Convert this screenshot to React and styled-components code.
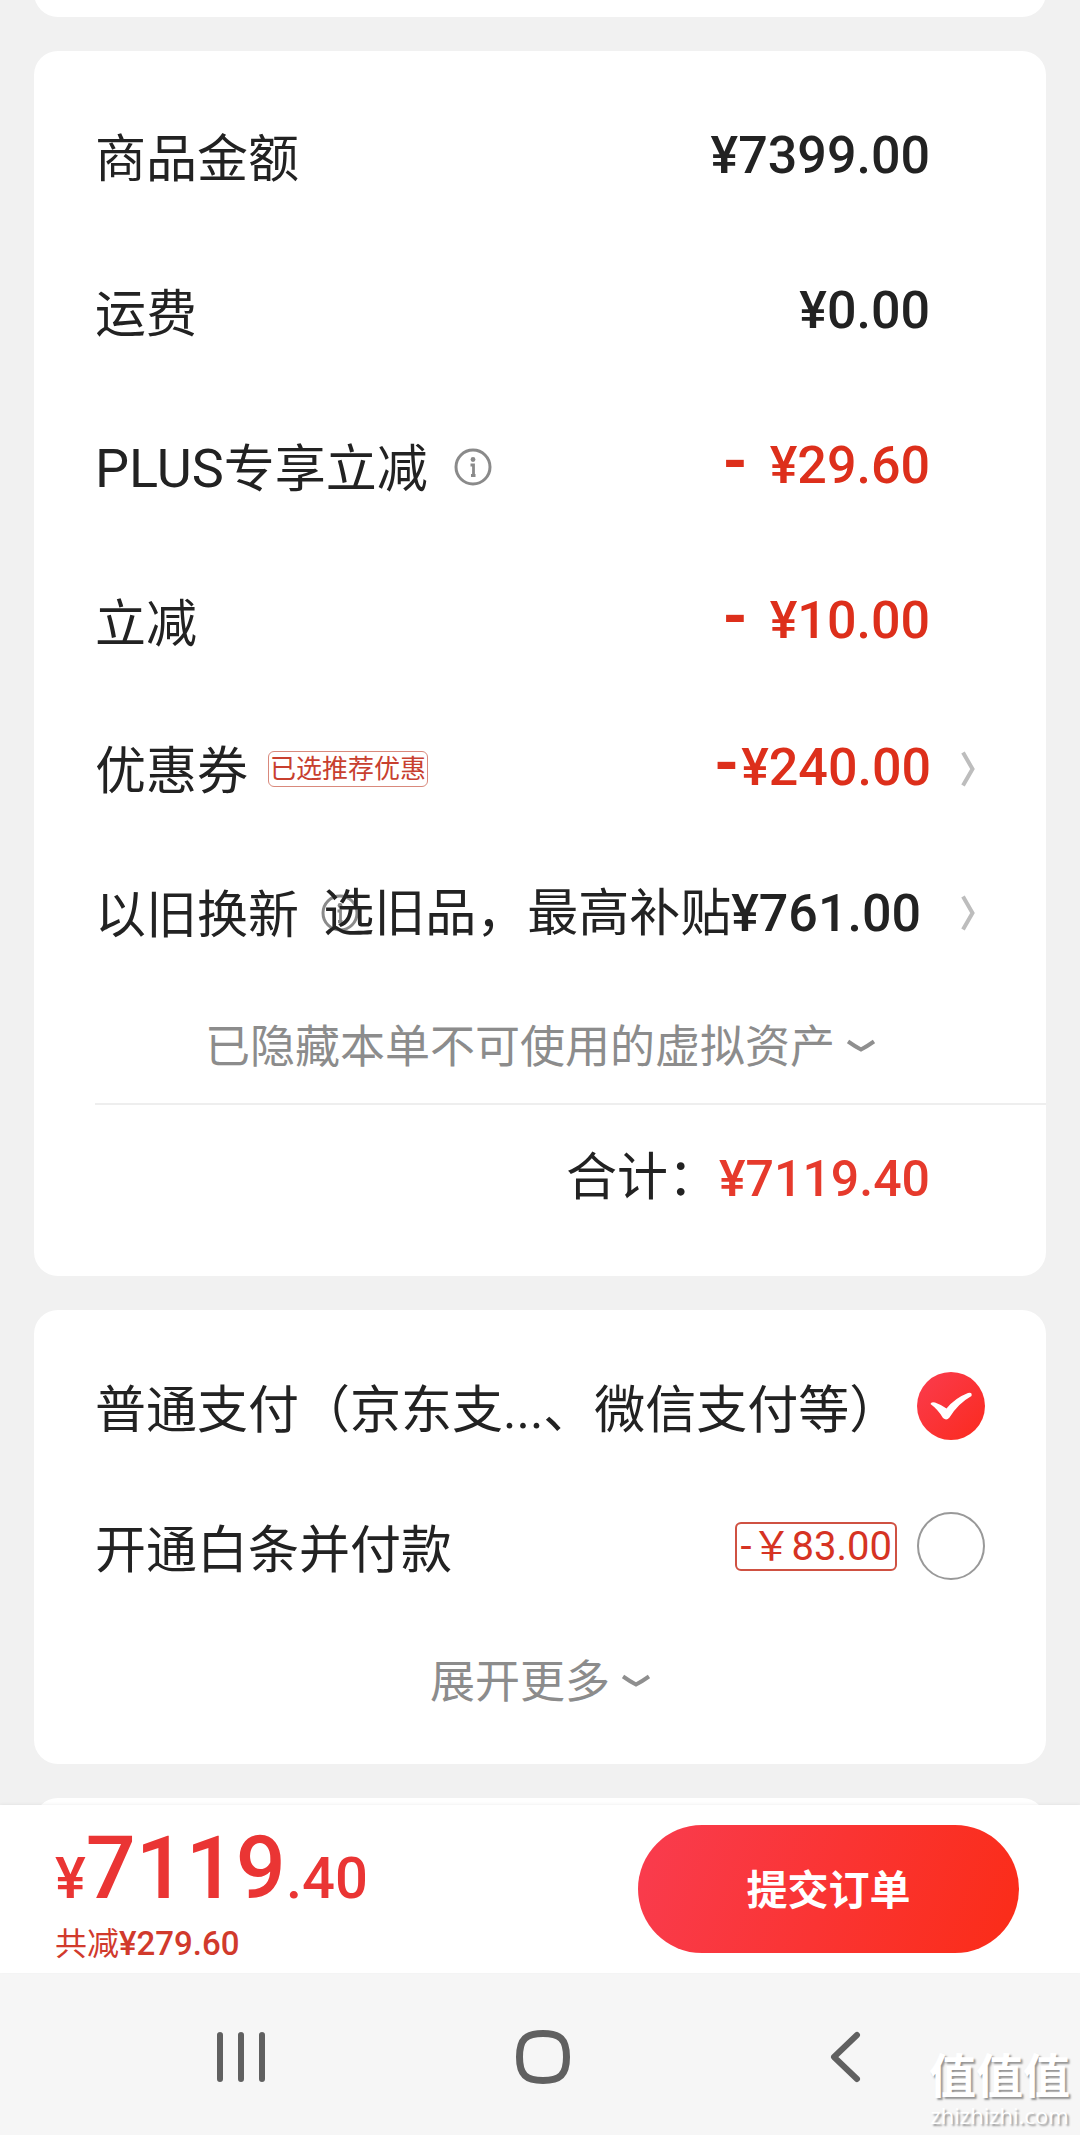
import React, { useState } from "react";
import styled, { createGlobalStyle } from "styled-components";

const GlobalStyle = createGlobalStyle`
  * { box-sizing: border-box; }
  body {
    margin: 0;
    background: #f1f1f1;
    color: #222;
    font-family: Roboto, "Noto Sans CJK SC", sans-serif;
  }
  button, input { font: inherit; color: inherit; margin: 0; padding: 0; }
  button { border: 0; background: none; cursor: pointer; }
`;

const Page = styled.div`
  position: relative;
  height: 100vh;
  display: flex;
  flex-direction: column;
`;

const Content = styled.main`
  flex: 1;
  min-height: 0;
  overflow: hidden;
  display: flex;
  flex-direction: column;
  gap: 34px;
  padding: 0 34px;
`;

const Card = styled.section`
  flex: none;
  background: #fff;
  border-radius: 24px;
  padding: ${(p) => p.$pad || "28px 0 31px"};
`;

const PreviousCard = styled(Card)`
  height: 60px;
  margin-top: -43px;
`;

const Row = styled.div`
  display: flex;
  align-items: center;
  height: ${(p) => p.$h || 155}px;
  padding: 0 61px;
  font-size: 51px;
  line-height: 60px;
  white-space: nowrap;
`;

const Label = styled.span`
  display: flex;
  align-items: center;
  gap: ${(p) => p.$gap || 26}px;
`;

const LabelText = styled.span`
  padding-top: 6px;
`;

const PayText = styled.span`
  padding-top: 10px;
`;

const Latin = styled.span`
  font-size: 54px;
`;

const Amount = styled.span`
  margin-left: auto;
  margin-right: ${(p) => p.$end ?? 55}px;
  padding-bottom: 2px;
  font-size: 52px;
  font-weight: 500;
  color: ${(p) => (p.$red ? "#dd2f1b" : "#222")};
`;

const Sign = styled.span`
  margin-right: ${(p) => (p.$wide ? 22 : 2)}px;
  font-size: 64px;
  font-weight: 700;
  line-height: 0;
`;

const TradeIn = styled.span`
  margin-left: auto;
  margin-right: 40px;
  padding-top: 2px;
  position: relative;
`;

const Price = styled.strong`
  font-size: 52px;
  font-weight: 500;
`;

const OverlappedInfo = styled.span`
  display: flex;
  margin-right: -48px;
`;

const CouponTag = styled.span`
  padding: 0 1px;
  border: 1px solid #d9897c;
  border-radius: 6px;
  color: #c8402f;
  font-size: 26px;
  line-height: 34px;
`;

const PriceTag = styled.span`
  margin-left: auto;
  margin-right: 20px;
  padding: 0 3px;
  border: 2px solid #cf5142;
  border-radius: 6px;
  color: #d63323;
  font-size: 40px;
  line-height: 45px;
`;

const Expand = styled.button`
  display: flex;
  align-items: center;
  justify-content: center;
  gap: 12px;
  width: 100%;
  height: ${(p) => p.$h}px;
  color: #8c8c8c;
  font-size: 45px;
  line-height: 60px;
`;

const ExpandText = styled.span`
  padding-top: 4px;
`;

const Divider = styled.hr`
  margin: 0 0 0 61px;
  border: 0;
  height: 2px;
  background: #eee;
`;

const TotalRow = styled(Row)`
  justify-content: flex-end;
`;

const Total = styled.strong`
  margin-right: 55px;
  padding-top: 8px;
  font-size: 50px;
  font-weight: 500;
  color: #e63a2c;
`;

const PayOption = styled.label`
  display: flex;
  align-items: center;
  justify-content: space-between;
  height: 140px;
  padding: 0 61px;
  font-size: 51px;
  line-height: 60px;
  white-space: nowrap;
  cursor: pointer;
`;

const RadioBox = styled.span`
  display: grid;
  width: 68px;
  height: 68px;
  > * { grid-area: 1 / 1; }
`;

const Radio = styled.input`
  appearance: none;
  width: 68px;
  height: 68px;
  border: 2px solid #999;
  border-radius: 50%;
  &:checked {
    border: 0;
    background: linear-gradient(135deg, #fa3c4e, #fb2a1e);
  }
`;

const Check = styled.svg`
  pointer-events: none;
`;

const NextCard = styled(Card)`
  height: 80px;
`;

const SubmitBar = styled.footer`
  flex: none;
  display: flex;
  align-items: center;
  justify-content: space-between;
  height: 168px;
  padding: 0 61px 0 55px;
  background: #fff;
  box-shadow: 0 -1px 3px rgba(0, 0, 0, 0.05);
  position: relative;
`;

const Summary = styled.div`
  display: flex;
  flex-direction: column;
  padding-top: 8px;
`;

const GrandTotal = styled.div`
  color: #ea3534;
  font-size: 58px;
  font-weight: 500;
  line-height: 92px;
`;

const Whole = styled.span`
  font-size: 88px;
`;

const Saved = styled.div`
  color: #d13a2c;
  font-size: 32px;
  line-height: 40px;
  strong { font-size: 33px; font-weight: 500; }
`;

const Submit = styled.button`
  width: 381px;
  height: 128px;
  padding-bottom: 4px;
  border-radius: 64px;
  background: linear-gradient(110deg, #f93c4f, #fb2c17);
  color: #fff;
  font-size: 41px;
  font-weight: 700;
`;

const NavBar = styled.nav`
  flex: none;
  display: grid;
  grid-template-columns: repeat(3, 302px);
  justify-content: center;
  align-items: center;
  height: 162px;
  padding: 6px 0 0 6px;
  background: #f6f6f6;
`;

const NavButton = styled.button`
  display: flex;
  align-items: center;
  justify-content: center;
  height: 100px;
`;

const Watermark = styled.div`
  position: absolute;
  right: 10px;
  bottom: 6px;
  display: flex;
  flex-direction: column;
  align-items: center;
  color: #fff;
  text-shadow: 2px 2px 2px rgba(0, 0, 0, 0.4);
  pointer-events: none;
`;

const WatermarkName = styled.span`
  font-size: 47px;
  font-weight: 700;
  line-height: 48px;
`;

const WatermarkSite = styled.span`
  font-family: "Open Sans", sans-serif;
  font-size: 22px;
  line-height: 28px;
`;

const InfoIcon = () => (
  <svg width="38" height="38" viewBox="0 0 38 38" fill="none" stroke="#8a8a8a" aria-hidden="true">
    <circle cx="19" cy="19" r="17" strokeWidth="3" />
    <circle cx="19" cy="11.5" r="2.4" fill="#8a8a8a" stroke="none" />
    <path d="M16.500 17h3v10M17 27.500h4.500" strokeWidth="2.8" />
  </svg>
);

const ChevronSvg = styled.svg`
  margin-right: 10px;
`;

const ChevronRight = () => (
  <ChevronSvg width="14" height="36" viewBox="0 0 14 36" fill="none" stroke="#bdbdbd" strokeWidth="4" aria-hidden="true">
    <path d="M2 1.5 11.5 18 2 34.5" />
  </ChevronSvg>
);

const ChevronDown = () => (
  <svg width="28" height="14" viewBox="0 0 28 14" fill="none" stroke="#8f8f8f" strokeWidth="4" aria-hidden="true">
    <path d="M1 2.500Q8 7.500 14 10.500Q20 7.500 27 2.500" />
  </svg>
);

function PayRadio({ id, value, selected, onSelect }) {
  return (
    <RadioBox>
      <Radio id={id} type="radio" name="pay" checked={selected === value} onChange={() => onSelect(value)} />
      {selected === value && (
        <Check width="68" height="68" viewBox="0 0 68 68" aria-hidden="true">
          <path d="M13.500 32Q14 29.500 18 30.500Q25 33 29.500 36.500Q38 26 51 21Q55.500 20 54.500 24Q41 31.500 32.500 45.500Q29.500 49 26 46Q21 37.500 13.500 32Z" fill="#fff" />
        </Check>
      )}
    </RadioBox>
  );
}

export default function App() {
  const [pay, setPay] = useState("normal");
  return (
    <>
      <GlobalStyle />
      <Page>
        <Content>
          <PreviousCard />
          <Card>
            <Row><Label><LabelText>商品金额</LabelText></Label><Amount>¥7399.00</Amount></Row>
            <Row><Label><LabelText>运费</LabelText></Label><Amount>¥0.00</Amount></Row>
            <Row>
              <Label><LabelText><Latin>PLUS</Latin>专享立减</LabelText><InfoIcon /></Label>
              <Amount $red><Sign $wide>-</Sign>¥29.60</Amount>
            </Row>
            <Row><Label><LabelText>立减</LabelText></Label><Amount $red><Sign $wide>-</Sign>¥10.00</Amount></Row>
            <Row $h={139}>
              <Label $gap={20}><LabelText>优惠券</LabelText><CouponTag>已选推荐优惠</CouponTag></Label>
              <Amount $red $end={30}><Sign>-</Sign>¥240.00</Amount>
              <ChevronRight />
            </Row>
            <Row $h={150}>
              <Label $gap={22}><LabelText>以旧换新</LabelText><OverlappedInfo><InfoIcon /></OverlappedInfo></Label>
              <TradeIn>选旧品，最高补贴<Price>¥761.00</Price></TradeIn>
              <ChevronRight />
            </Row>
            <Expand type="button" $h={115}><ExpandText>已隐藏本单不可使用的虚拟资产</ExpandText><ChevronDown /></Expand>
            <Divider />
            <TotalRow $h={140}><LabelText>合计：</LabelText><Total>¥7119.40</Total></TotalRow>
          </Card>
          <Card $pad="26px 0 19px">
            <PayOption htmlFor="pay-normal">
              <PayText>普通支付（京东支...、微信支付等）</PayText>
              <PayRadio id="pay-normal" value="normal" selected={pay} onSelect={setPay} />
            </PayOption>
            <PayOption htmlFor="pay-credit">
              <PayText>开通白条并付款</PayText>
              <PriceTag>-￥83.00</PriceTag>
              <PayRadio id="pay-credit" value="credit" selected={pay} onSelect={setPay} />
            </PayOption>
            <Expand type="button" $h={129}><ExpandText>展开更多</ExpandText><ChevronDown /></Expand>
          </Card>
          <NextCard />
        </Content>
        <SubmitBar>
          <Summary>
            <GrandTotal>¥<Whole>7119</Whole>.40</GrandTotal>
            <Saved>共减<strong>¥279.60</strong></Saved>
          </Summary>
          <Submit type="button">提交订单</Submit>
        </SubmitBar>
        <NavBar>
          <NavButton type="button" aria-label="最近任务">
            <svg width="50" height="52" viewBox="0 0 50 52" stroke="#606060" strokeWidth="6" strokeLinecap="round">
              <path d="M4 4v44M25 4v44M46 4v44" />
            </svg>
          </NavButton>
          <NavButton type="button" aria-label="主屏幕">
            <svg width="56" height="56" viewBox="0 0 56 56" fill="none" stroke="#606060" strokeWidth="7">
              <path d="M28 4.500C45 4.500 51.500 10 51.500 28S45 51.500 28 51.500S4.500 46 4.500 28S11 4.500 28 4.500Z" />
            </svg>
          </NavButton>
          <NavButton type="button" aria-label="返回">
            <svg width="32" height="52" viewBox="0 0 32 52" fill="none" stroke="#606060" strokeWidth="6" strokeLinecap="round" strokeLinejoin="round">
              <path d="M28 4 5 26 28 48" />
            </svg>
          </NavButton>
        </NavBar>
        <Watermark>
          <WatermarkName>值值值</WatermarkName>
          <WatermarkSite>zhizhizhi.com</WatermarkSite>
        </Watermark>
      </Page>
    </>
  );
}
